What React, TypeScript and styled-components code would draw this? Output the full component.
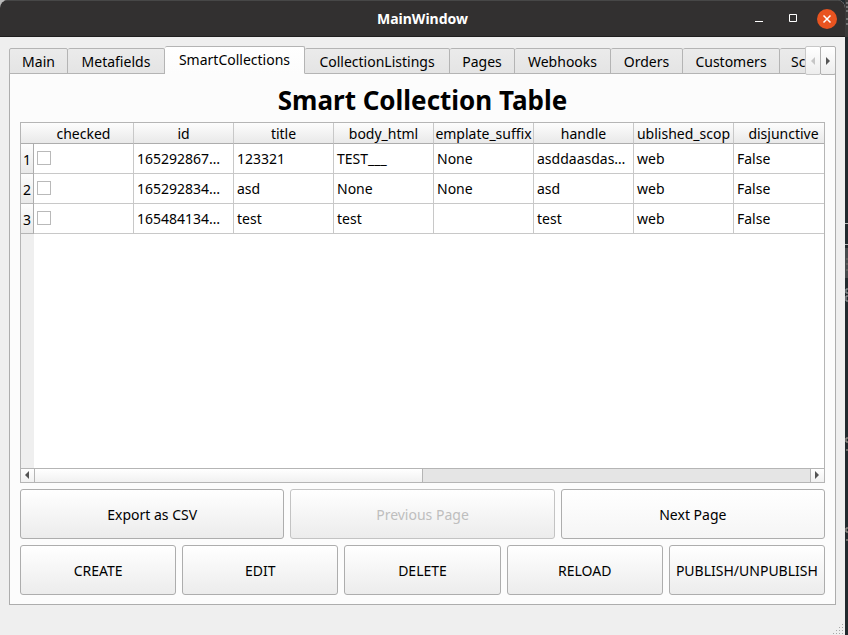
import React, { useState } from "react";
import styled, { createGlobalStyle, css } from "styled-components";

const GlobalStyle = createGlobalStyle`
  *, *::before, *::after { box-sizing: border-box; }
  html, body { margin: 0; }
  body, button, input, table {
    font-family: "Noto Sans", "Open Sans", sans-serif;
    font-size: 14px;
    line-height: 20px;
    color: #000;
  }
`;

const Desktop = styled.div`
  display: flex;
  min-height: 100vh;
  overflow: hidden;
  background: linear-gradient(90deg, #b9b9b9 50%, #222a2e 50%);
`;

const Backdrop = styled.div`
  flex: none;
  width: 3px;
  background: #222a2e;
  svg { display: block; }
`;

const Window = styled.div`
  flex: 1;
  min-width: 0;
  display: flex;
  flex-direction: column;
  background: #efefef;
  border-radius: 8px 8px 0 0;
  overflow: hidden;
`;

const TitleBar = styled.header`
  flex: none;
  height: 37px;
  display: grid;
  grid-template-columns: 1fr auto 1fr;
  align-items: center;
  background: #323030;
  border-top: 1px solid #474747;
  border-bottom: 1px solid #1f1e1e;
`;

const WindowName = styled.span`
  grid-column: 2;
  font-weight: 700;
  color: #fff;
`;

const WindowControls = styled.div`
  display: flex;
  justify-content: flex-end;
  align-items: center;
  gap: 14px;
  padding-right: 8px;
`;

const ControlButton = styled.button<{ $close?: boolean }>`
  width: 20px;
  height: 20px;
  padding: 0;
  border: 0;
  border-radius: 50%;
  background: ${(p) => (p.$close ? "#e95420" : "transparent")};
  svg { display: block; }
`;

const Body = styled.main`
  flex: 1;
  display: flex;
  flex-direction: column;
  padding: 9px 9px 0;
`;

const TabBar = styled.div`
  position: relative;
  z-index: 1;
  flex: none;
  display: flex;
  align-items: flex-end;
  height: 28px;
  margin-bottom: -1px;
`;

const TabStrip = styled.div`
  flex: 1;
  min-width: 0;
  display: flex;
  align-items: flex-end;
  overflow: hidden;
`;

const Tab = styled.button<{ $width: number; $selected: boolean }>`
  flex: none;
  width: ${(p) => p.$width}px;
  height: 26px;
  padding: 2px 0 0;
  white-space: nowrap;
  border: 1px solid #b4b4b4;
  border-left-width: 0;
  border-radius: 2px 2px 0 0;
  background: linear-gradient(#ebebeb, #e4e4e4);
  &:first-child { border-left-width: 1px; }
  &:last-child { padding-left: 11px; text-align: left; }
  ${(p) =>
    p.$selected &&
    css`
      height: 28px;
      padding: 0;
      border-bottom-color: #fcfcfc;
      background: linear-gradient(#fff, #fcfcfc);
    `}
`;

const TabScroll = styled.div`
  flex: none;
  display: flex;
  height: 28px;
`;

const TabScrollButton = styled.button`
  display: grid;
  place-items: center;
  width: 16px;
  height: 29px;
  padding: 0;
  border: 1px solid #b0b0b0;
  border-radius: 2px;
  background: linear-gradient(#fff, #ededed);
  & + & { margin-left: -1px; }
  &:disabled { border-color: #c8c8c8; }
`;

const Panel = styled.section`
  flex: 1;
  display: flex;
  flex-direction: column;
  gap: 6px;
  padding: 10px 10px 9px;
  border: 1px solid #adadad;
  background: #fcfcfc;
`;

const Heading = styled.h1`
  margin: 0;
  font-size: 26px;
  line-height: 32px;
  font-weight: 700;
  text-align: center;
`;

const TableFrame = styled.div`
  flex: 1;
  display: flex;
  flex-direction: column;
  border: 1px solid #b5b5b5;
  background: #fff;
`;

const TableView = styled.div`
  flex: 1;
  overflow: hidden;
  background: linear-gradient(90deg, #efefef 13px, #fff 13px);
`;

const Table = styled.table`
  table-layout: fixed;
  width: 813px;
  border-collapse: separate;
  border-spacing: 0;
`;

const RowNumberCol = styled.col`
  width: 13px;
`;

const ColumnHead = styled.th<{ $corner?: boolean }>`
  height: 21px;
  padding: 0;
  font-weight: 400;
  white-space: nowrap;
  text-align: center;
  line-height: 20px;
  border-right: ${(p) => (p.$corner ? "0" : "1px solid #c8c8c8")};
  border-bottom: 1px solid #adadad;
  background: linear-gradient(#fdfdfd, #e9e9e9);
`;

const HeadLabel = styled.span`
  display: block;
  height: 20px;
  line-height: 22px;
`;

const RowHead = styled.th`
  height: 30px;
  padding: 2px 0 0;
  font-weight: 400;
  text-align: center;
  border-right: 1px solid #adadad;
  border-bottom: 1px solid #b5b5b5;
  background: linear-gradient(#fdfdfd, #e9e9e9);
`;

const Cell = styled.td`
  height: 30px;
  padding: 0 3px;
  overflow: hidden;
  white-space: nowrap;
  border-right: 1px solid #c8c8c8;
  border-bottom: 1px solid #c8c8c8;
  background: #fff;
`;

const CheckCell = styled(Cell)`
  padding-bottom: 2px;
`;

const CheckBox = styled.input`
  appearance: none;
  display: block;
  width: 14px;
  height: 14px;
  margin: 0;
  border: 1px solid #b9b9b9;
  background: #fff;
  &:checked { background: #308cc6; }
`;

const ScrollBar = styled.div`
  flex: none;
  display: flex;
  height: 14px;
  border-top: 1px solid #b5b5b5;
  background: #e5e5e5;
`;

const ScrollArrow = styled.button<{ $end?: boolean }>`
  display: grid;
  place-items: center;
  width: 14px;
  padding: 0 1px 1px 0;
  border: 0 solid #b5b5b5;
  border-width: ${(p) => (p.$end ? "0 0 0 1px" : "0 1px 0 0")};
  background: linear-gradient(#fff, #f1f1f1);
`;

const ScrollTrack = styled.div`
  flex: 1;
`;

const ScrollThumb = styled.div`
  width: 50%;
  height: 100%;
  border-right: 1px solid #b5b5b5;
  background: linear-gradient(#fff, #f1f1f1);
`;

const ButtonRow = styled.div`
  flex: none;
  display: grid;
  grid-auto-flow: column;
  grid-auto-columns: minmax(0, 1fr);
  gap: 6px;
`;

const PushButton = styled.button<{ $light?: boolean }>`
  height: 50px;
  padding: 2px 0 0;
  white-space: nowrap;
  border: 1px solid #adadad;
  border-radius: 3px;
  background: linear-gradient(#fff, ${(p) => (p.$light ? "#f5f5f5" : "#ececec")});
  &:disabled {
    color: #bebebe;
    border-color: #c3c3c3;
  }
`;

const StatusBar = styled.footer`
  flex: none;
  display: flex;
  justify-content: flex-end;
  align-items: flex-end;
  height: 30px;
`;

const Arrow = ({ left, faded }: { left?: boolean; faded?: boolean }) => (
  <svg width="6" height="8" viewBox="0 0 6 8" aria-hidden="true">
    <path d={left ? "M5 0v8L1 4z" : "M1 0v8l4-4z"} fill={faded ? "#c6c6c6" : "#555"} />
  </svg>
);

const tabs: [string, number][] = [
  ["Main", 59],
  ["Metafields", 97],
  ["SmartCollections", 140],
  ["CollectionListings", 145],
  ["Pages", 65],
  ["Webhooks", 96],
  ["Orders", 72],
  ["Customers", 97],
  ["Sc", 40],
];

const columns = [
  "checked",
  "id",
  "title",
  "body_html",
  "emplate_suffix",
  "handle",
  "ublished_scop",
  "disjunctive",
];

const rows = [
  ["165292867…", "123321", "TEST___", "None", "asddaasdas…", "web", "False"],
  ["165292834…", "asd", "None", "None", "asd", "web", "False"],
  ["165484134…", "test", "test", "", "test", "web", "False"],
];

const gripDots = [
  [9, 1],
  [6, 4], [9, 4],
  [3, 7], [6, 7], [9, 7],
  [0, 10], [3, 10], [6, 10], [9, 10],
];

export default function App() {
  const [selected, setSelected] = useState("SmartCollections");

  return (
    <>
      <GlobalStyle />
      <Desktop>
        <Window>
          <TitleBar>
            <WindowName>MainWindow</WindowName>
            <WindowControls>
              <ControlButton aria-label="Minimize">
                <svg width="20" height="20" aria-hidden="true">
                  <path d="M6 12.5h8" stroke="#fff" />
                </svg>
              </ControlButton>
              <ControlButton aria-label="Maximize">
                <svg width="20" height="20" aria-hidden="true">
                  <path d="M6.5 5.5h7v7h-7z" fill="none" stroke="#fff" />
                </svg>
              </ControlButton>
              <ControlButton $close aria-label="Close">
                <svg width="20" height="20" aria-hidden="true">
                  <path d="M6.500 6.500l7 7M13.500 6.500l-7 7" stroke="#fff" strokeWidth="1.5" />
                </svg>
              </ControlButton>
            </WindowControls>
          </TitleBar>
          <Body>
            <TabBar>
              <TabStrip role="tablist">
                {tabs.map(([name, width]) => (
                  <Tab
                    key={name}
                    role="tab"
                    aria-selected={name === selected}
                    $width={width}
                    $selected={name === selected}
                    onClick={() => setSelected(name)}
                  >
                    {name}
                  </Tab>
                ))}
              </TabStrip>
              <TabScroll>
                <TabScrollButton disabled aria-label="Scroll tabs left">
                  <Arrow left faded />
                </TabScrollButton>
                <TabScrollButton aria-label="Scroll tabs right">
                  <Arrow />
                </TabScrollButton>
              </TabScroll>
            </TabBar>
            <Panel>
              <Heading>Smart Collection Table</Heading>
              <TableFrame>
                <TableView>
                  <Table>
                    <colgroup>
                      <RowNumberCol />
                      {columns.map((c) => (
                        <col key={c} />
                      ))}
                    </colgroup>
                    <thead>
                      <tr>
                        <ColumnHead $corner />
                        {columns.map((c) => (
                          <ColumnHead key={c} scope="col">
                            <HeadLabel>{c}</HeadLabel>
                          </ColumnHead>
                        ))}
                      </tr>
                    </thead>
                    <tbody>
                      {rows.map((row, r) => (
                        <tr key={r}>
                          <RowHead scope="row">{r + 1}</RowHead>
                          <CheckCell>
                            <CheckBox type="checkbox" aria-label={`Select row ${r + 1}`} />
                          </CheckCell>
                          {row.map((value, c) => (
                            <Cell key={c}>{value}</Cell>
                          ))}
                        </tr>
                      ))}
                    </tbody>
                  </Table>
                </TableView>
                <ScrollBar>
                  <ScrollArrow aria-label="Scroll left">
                    <Arrow left />
                  </ScrollArrow>
                  <ScrollTrack>
                    <ScrollThumb />
                  </ScrollTrack>
                  <ScrollArrow $end aria-label="Scroll right">
                    <Arrow />
                  </ScrollArrow>
                </ScrollBar>
              </TableFrame>
              <ButtonRow>
                <PushButton>Export as CSV</PushButton>
                <PushButton disabled>Previous Page</PushButton>
                <PushButton $light>Next Page</PushButton>
              </ButtonRow>
              <ButtonRow>
                <PushButton>CREATE</PushButton>
                <PushButton>EDIT</PushButton>
                <PushButton>DELETE</PushButton>
                <PushButton>RELOAD</PushButton>
                <PushButton>PUBLISH/UNPUBLISH</PushButton>
              </ButtonRow>
            </Panel>
          </Body>
          <StatusBar>
            <svg width="12" height="12" aria-hidden="true">
              {gripDots.map(([x, y]) => (
                <rect key={`${x}-${y}`} x={x} y={y} width="1" height="1" fill="#a8a8a8" />
              ))}
            </svg>
          </StatusBar>
        </Window>
        <Backdrop>
          <svg width="3" height="635" aria-hidden="true">
            <path d="M0 0h3v37H0z" fill="#3a3a3a" />
            <path d="M1 3h2M1 7h2M1 11h2M1 19h2M1 24h2" stroke="#a9adaf" />
            <path d="M0 223.500h3M0 244.500h3" stroke="#b5b8b9" />
            <path d="M0 248h3v30H0z" fill="#474b4d" />
            <path d="M1 259h2M1 264h2M1 270h2" stroke="#77736f" />
            <path d="M3 289H1v4h2M3 296H1v5h2" fill="none" stroke="#a9adaf" />
            <path d="M3 438H1v4h2M1 450h2M3 528H1v4h2M1 540h2" fill="none" stroke="#b3aaa2" />
          </svg>
        </Backdrop>
      </Desktop>
    </>
  );
}
